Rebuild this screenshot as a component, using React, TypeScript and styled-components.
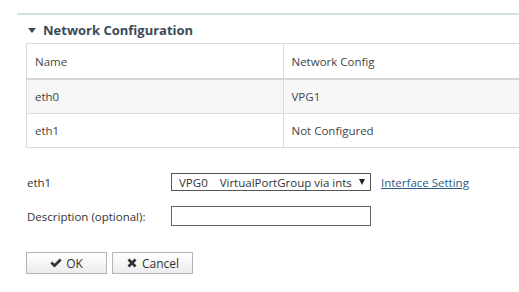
import { FC } from 'react'
import styled, { createGlobalStyle } from 'styled-components'

const GlobalStyle = createGlobalStyle`
  html, body {
    margin: 0;
    padding: 0;
    background: #fff;
    overflow: hidden;
  }
  body {
    font-family: "Open Sans", "Noto Sans", Arial, sans-serif;
    font-size: 11.5px;
    color: #333;
  }
`;

const Page = styled.div`
  width: 519px;
  height: 292px;
  padding: 13px 0 0 17px;
  box-sizing: border-box;
  overflow: hidden;
`;

const Panel = styled.section`
  border-top: 2px solid #d3dee3;
  width: 560px;
`;

const SectionHeader = styled.h2`
  display: flex;
  align-items: center;
  gap: 7px;
  margin: 0;
  padding: 5px 0 0 11px;
  height: 24px;
  box-sizing: border-box;
  font-size: 13px;
  font-weight: 700;
  color: #3b4a58;
`;

const Caret = styled.span`
  width: 0;
  height: 0;
  border-left: 4px solid transparent;
  border-right: 4px solid transparent;
  border-top: 5px solid #3b4a58;
  margin-top: 1px;
`;

const Table = styled.table`
  margin: 4px 0 0 9px;
  width: 514px;
  border-collapse: collapse;
  table-layout: fixed;
`;

const HeadCell = styled.th`
  text-align: left;
  font-weight: 400;
  height: 34px;
  padding: 0 8px;
  border: 1px solid #dcdcdc;
  border-bottom: 2px solid #d6d6d6;
  color: #444;
`;

const Row = styled.tr<{ striped?: boolean }>`
  background: ${({ striped }) => (striped ? '#f7f7f7' : '#fff')};
`;

const Cell = styled.td`
  height: 33px;
  padding: 0 8px;
  border: 1px solid #dcdcdc;
  color: #444;
`;

const Form = styled.div`
  padding: 25px 0 0 10px;
  display: flex;
  flex-direction: column;
  gap: 15px;
`;

const FormRow = styled.div`
  display: flex;
  align-items: center;
`;

const Label = styled.label`
  width: 144px;
  color: #333;
`;

const Select = styled.div`
  width: 200px;
  height: 18px;
  box-sizing: border-box;
  border: 1px solid #555;
  display: flex;
  align-items: center;
  padding: 0 5px 0 7px;
  color: #333;
`;

const SelectText = styled.span`
  flex: 1;
  min-width: 0;
  white-space: pre;
  overflow: hidden;
`;

const SelectArrow = styled.span`
  flex: none;
  width: 0;
  height: 0;
  margin-left: 4px;
  border-left: 3.5px solid transparent;
  border-right: 3.5px solid transparent;
  border-top: 6px solid #222;
`;

const TextInput = styled.input`
  width: 200px;
  height: 20px;
  box-sizing: border-box;
  border: 1px solid #666;
  margin: 0;
  padding: 0 4px;
  font: inherit;
`;

const Link = styled.a`
  margin-left: 10px;
  color: #2b5c85;
  text-decoration: underline;
  cursor: pointer;
`;

const Buttons = styled.div`
  display: flex;
  gap: 5px;
  padding: 26px 0 0 9px;
`;

const Button = styled.button`
  width: 81px;
  height: 22px;
  box-sizing: border-box;
  border: 1px solid #b5b5b5;
  background: linear-gradient(#ffffff, #ececec);
  font: inherit;
  font-size: 12px;
  color: #333;
  display: flex;
  align-items: center;
  justify-content: center;
  gap: 4px;
  padding: 0;
`;

const Icon = styled.svg`
  width: 12px;
  height: 12px;
  fill: #333;
`;

const App: FC = () => {
  return (
    <Page>
      <GlobalStyle />
      <Panel>
        <SectionHeader>
          <Caret />
          Network Configuration
        </SectionHeader>
        <Table>
          <thead>
            <tr>
              <HeadCell>Name</HeadCell>
              <HeadCell>Network Config</HeadCell>
            </tr>
          </thead>
          <tbody>
            <Row striped>
              <Cell>eth0</Cell>
              <Cell>VPG1</Cell>
            </Row>
            <Row>
              <Cell>eth1</Cell>
              <Cell>Not Configured</Cell>
            </Row>
          </tbody>
        </Table>
      </Panel>
      <Form>
        <FormRow>
          <Label>eth1</Label>
          <Select>
            <SelectText>{'VPG0    VirtualPortGroup via ints'}</SelectText>
            <SelectArrow />
          </Select>
          <Link>Interface Setting</Link>
        </FormRow>
        <FormRow>
          <Label>Description (optional):</Label>
          <TextInput />
        </FormRow>
      </Form>
      <Buttons>
        <Button>
          <Icon viewBox="0 0 16 16">
            <path d="M0.5 8.5 L3 6 L6 9 L13 2 L15.5 4.5 L6 14 Z" />
          </Icon>
          OK
        </Button>
        <Button>
          <Icon viewBox="0 0 16 16">
            <path d="M2 4.6 L4.6 2 L8 5.4 L11.4 2 L14 4.6 L10.6 8 L14 11.4 L11.4 14 L8 10.6 L4.6 14 L2 11.4 L5.4 8 Z" />
          </Icon>
          Cancel
        </Button>
      </Buttons>
    </Page>
  )
}

export default App
